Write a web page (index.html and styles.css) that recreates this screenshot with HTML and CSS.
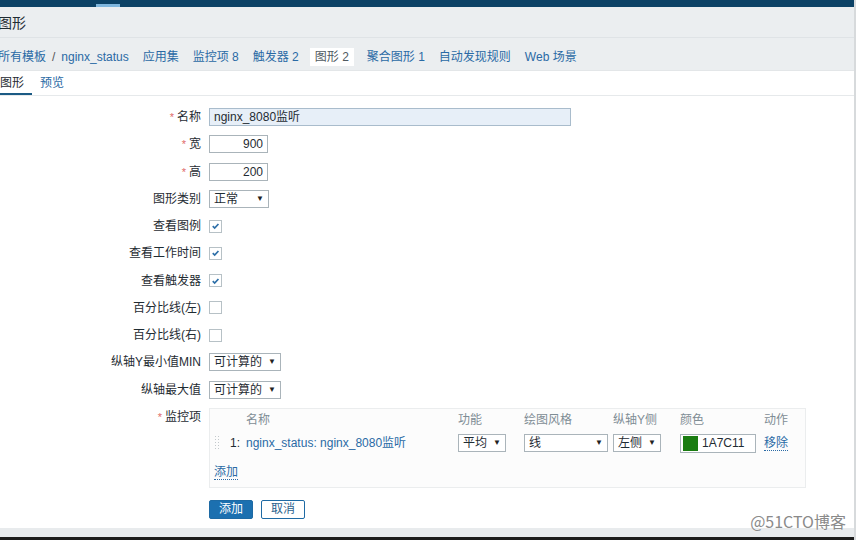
FILE: index.html
```html
<!DOCTYPE html>
<html>
<head>
<meta charset="utf-8">
<link rel="stylesheet" href="styles.css">
</head>
<body>
<div class="page">
  <div class="topbar"><span class="topbar-mark"></span></div>
  <div class="header"><h1 class="title">图形</h1></div>
  <div class="crumbs">
    <span class="crumb link first">所有模板</span>
    <span class="sep">/</span>
    <span class="crumb link host">nginx_status</span>
    <span class="crumb link">应用集</span>
    <span class="crumb link">监控项 8</span>
    <span class="crumb link">触发器 2</span>
    <span class="crumb selected">图形 2</span>
    <span class="crumb link">聚合图形 1</span>
    <span class="crumb link">自动发现规则</span>
    <span class="crumb link">Web 场景</span>
  </div>
  <div class="tabs">
    <span class="tab active">图形</span>
    <span class="tab link">预览</span>
  </div>

  <div class="form">
    <div class="row"><span class="lbl"><i class="req">*</i>名称</span><span class="input name">nginx_8080监听</span></div>
    <div class="row"><span class="lbl"><i class="req">*</i>宽</span><span class="input num">900</span></div>
    <div class="row"><span class="lbl"><i class="req">*</i>高</span><span class="input num">200</span></div>
    <div class="row"><span class="lbl">图形类别</span><span class="select w60">正常<b class="arrow">▼</b></span></div>
    <div class="row"><span class="lbl">查看图例</span><span class="check on"><svg viewBox="0 0 12 12" width="12" height="12"><path d="M3 6.2 L5.1 8.3 L9.2 3.8" fill="none" stroke="#2d6fa8" stroke-width="1.8"/></svg></span></div>
    <div class="row"><span class="lbl">查看工作时间</span><span class="check on"><svg viewBox="0 0 12 12" width="12" height="12"><path d="M3 6.2 L5.1 8.3 L9.2 3.8" fill="none" stroke="#2d6fa8" stroke-width="1.8"/></svg></span></div>
    <div class="row"><span class="lbl">查看触发器</span><span class="check on"><svg viewBox="0 0 12 12" width="12" height="12"><path d="M3 6.2 L5.1 8.3 L9.2 3.8" fill="none" stroke="#2d6fa8" stroke-width="1.8"/></svg></span></div>
    <div class="row"><span class="lbl">百分比线(左)</span><span class="check"></span></div>
    <div class="row"><span class="lbl">百分比线(右)</span><span class="check"></span></div>
    <div class="row"><span class="lbl">纵轴Y最小值MIN</span><span class="select w72">可计算的<b class="arrow">▼</b></span></div>
    <div class="row"><span class="lbl">纵轴最大值</span><span class="select w72">可计算的<b class="arrow">▼</b></span></div>
    <div class="row items-row"><span class="lbl"><i class="req">*</i>监控项</span>
      <div class="items">
        <div class="grid head">
          <span></span><span>名称</span><span>功能</span><span>绘图风格</span><span>纵轴Y侧</span><span>颜色</span><span>动作</span>
        </div>
        <div class="grid item">
          <span class="numcell"><span class="drag"></span><span class="idx">1:</span></span>
          <span class="link">nginx_status: nginx_8080监听</span>
          <span class="select w48">平均<b class="arrow">▼</b></span>
          <span class="select w84">线<b class="arrow">▼</b></span>
          <span class="select w48">左侧<b class="arrow">▼</b></span>
          <span class="color"><span class="swatch"></span>1A7C11</span>
          <span class="link dotted">移除</span>
        </div>
        <div class="add"><span class="link dotted">添加</span></div>
      </div>
    </div>
    <div class="row buttons"><span class="lbl"></span><span class="btn primary">添加</span><span class="btn">取消</span></div>
  </div>

  <div class="spacer"></div>
  <div class="footer"></div>
  <div class="watermark">@51CTO博客</div>
</div>
</body>
</html>
```
FILE: styles.css
```css
html, body {
  margin: 0;
  padding: 0;
  background: #ffffff;
}
body {
  font-family: "Liberation Sans", "Noto Sans CJK SC", sans-serif;
  font-size: 12px;
  line-height: 18px;
  color: #1f2c33;
}
.page {
  position: relative;
  width: 856px;
  height: 540px;
  overflow: hidden;
  display: flex;
  flex-direction: column;
  box-sizing: border-box;
  border-right: 2px solid #d7dadc;
}
.topbar {
  height: 7px;
  background: #0c4266;
  position: relative;
  flex: none;
}
.topbar-mark {
  position: absolute;
  left: 96px;
  top: 4px;
  width: 24px;
  height: 3px;
  background: #7fb6dd;
}
.header {
  height: 30px;
  background: #ebeef0;
  border-bottom: 1px solid #dfe3e6;
  display: flex;
  align-items: center;
  flex: none;
}
.title {
  margin: 2px 0 0 -2px;
  font-size: 14px;
  line-height: 18px;
  font-weight: normal;
  color: #1f2c33;
}
.crumbs {
  height: 33px;
  padding-top: 5px;
  box-sizing: border-box;
  background: #ebeef0;
  border-bottom: 1px solid #e3e6e8;
  display: flex;
  align-items: center;
  margin-left: -9px;
  flex: none;
}
.link { color: #2a6aa5; }
.crumb {
  padding: 2px 7px;
  line-height: 14px;
}
.crumb.first { padding-right: 4px; }
.crumb.host { padding-left: 4px; }
.sep { color: #555; padding: 0 2px; line-height: 14px; }
.crumb.selected {
  background: #ffffff;
  color: #4f5a61;
  padding: 2px 5px;
  margin: 0 6px 0 4px;
}
.tabs {
  height: 24px;
  border-bottom: 1px solid #e6e9eb;
  display: flex;
  margin-left: -8px;
  flex: none;
}
.tab {
  padding: 0 8px;
  line-height: 24px;
  height: 23px;
}
.tab.active {
  color: #1f2c33;
  border-bottom: 2px solid #1b5a84;
  height: 22px;
}
.form {
  display: flex;
  flex-direction: column;
  gap: 9.25px;
  padding-top: 12px;
  flex: none;
}
.row {
  display: flex;
  align-items: center;
  gap: 8px;
  height: 18px;
}
.row.items-row { align-items: flex-start; gap: 8px; height: auto; }
.row.buttons { gap: 8px; margin-top: 3px; }
.lbl {
  width: 201px;
  text-align: right;
  line-height: 18px;
  height: 18px;
  flex: none;
}
.req {
  font-style: normal;
  color: #e06a6a;
  margin-right: 3px;
  font-size: 11px;
  line-height: 10px;
}
.input {
  box-sizing: border-box;
  height: 18px;
  line-height: 16px;
  border: 1px solid #aab4ba;
  padding: 0 4px;
  background: #fff;
}
.input.name {
  width: 362px;
  background: #e7eff8;
  border-color: #a9bccc;
}
.input.num {
  width: 59px;
  text-align: right;
}
.select {
  box-sizing: border-box;
  height: 18px;
  line-height: 16px;
  border: 1px solid #aab4ba;
  padding: 0 4px;
  background: #fff;
  display: inline-flex;
  justify-content: space-between;
  align-items: center;
  color: #1f2c33;
}
.arrow {
  font-weight: normal;
  font-size: 8px;
  color: #222;
}
.w60 { width: 60px; }
.w72 { width: 72px; }
.w48 { width: 48px; }
.w84 { width: 84px; }
.check {
  box-sizing: border-box;
  width: 13px;
  height: 13px;
  border: 1px solid #b7c1c6;
  background: #fff;
  display: inline-flex;
  align-items: center;
  justify-content: center;
}
.check svg { display: block; }
.items {
  box-sizing: border-box;
  width: 597px;
  height: 80px;
  border: 1px solid #ebedee;
  background: #fcfcfc;
  padding: 2px 0 0 0;
}
.grid {
  display: grid;
  grid-template-columns: 36px 212px 66px 89px 67px 84px 1fr;
  align-items: center;
  justify-items: start;
}
.head {
  height: 18px;
  color: #7f8d95;
}
.item {
  margin-top: 5px;
  height: 19px;
}
.numcell {
  display: flex;
  align-items: center;
}
.drag {
  width: 6px;
  height: 16px;
  margin-left: 4px;
  background-image: radial-gradient(circle, #c3c9cc 0.8px, transparent 1px);
  background-size: 3px 3px;
}
.idx { margin-left: 10px; color: #1f2c33; }
.color {
  box-sizing: border-box;
  width: 76px;
  height: 19px;
  border: 1px solid #aab4ba;
  background: #fff;
  display: flex;
  align-items: center;
  padding-left: 2px;
  gap: 4px;
}
.swatch {
  width: 15px;
  height: 15px;
  background: #1a7c11;
}
.dotted {
  border-bottom: 1px dotted #2a6aa5;
  line-height: 14px;
}
.add {
  margin-top: 10px;
  padding-left: 4px;
}
.btn {
  box-sizing: border-box;
  width: 44px;
  height: 19px;
  line-height: 17px;
  text-align: center;
  border: 1px solid #1e6aa4;
  color: #2a5f8d;
  background: #fff;
  border-radius: 2px;
}
.btn.primary {
  background: #1c70b0;
  color: #fff;
}
.spacer { flex: 1; }
.footer {
  height: 9px;
  background: #e8ebed;
  border-bottom: 3px solid #1c1c1c;
  flex: none;
}
.watermark {
  position: absolute;
  right: 8px;
  bottom: 9px;
  font-family: "Noto Sans CJK SC", sans-serif;
  font-size: 16px;
  line-height: 20px;
  color: #8a8a8a;
  text-shadow: 0 0 1px #fff;
}
```
